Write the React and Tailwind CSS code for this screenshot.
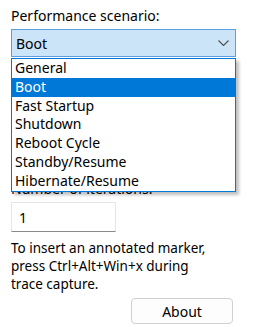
const options = [
  "General",
  "Boot",
  "Fast Startup",
  "Shutdown",
  "Reboot Cycle",
  "Standby/Resume",
  "Hibernate/Resume",
];

export default function App() {
  const selected = "Boot";

  return (
    <div
      className="w-[271px] h-[327px] bg-white text-black text-[14px] overflow-hidden"
      style={{ fontFamily: '"Noto Sans", "Open Sans", sans-serif' }}
    >
      <div className="pl-[11px] pt-[6px] w-[236px]">
        <div className="h-[20px] leading-[20px]">Performance scenario:</div>

        {/* combo box with open list */}
        <div className="relative mt-[3px]">
          <div className="h-[28px] border border-[#5a9fe0] bg-[#cce4f7] flex items-center justify-between pl-[4px] pr-[6px]">
            <span className="text-[14px]">{selected}</span>
            <svg width="11" height="6" viewBox="0 0 11 6" fill="none">
              <path d="M0.5 0.5 L5.5 5.5 L10.5 0.5" stroke="#555" strokeWidth="1.2" />
            </svg>
          </div>

          <div className="absolute left-0 top-[29px] w-full z-10 border border-[#0078d7] bg-white shadow-[3px_3px_3px_rgba(0,0,0,0.25)]">
            {options.map((o) => (
              <div
                key={o}
                className={
                  o === selected
                    ? "h-[18.8px] leading-[18.8px] pl-[3px] text-[14px] bg-[#0078d7] text-white"
                    : "h-[18.8px] leading-[18.8px] pl-[3px] text-[14px]"
                }
              >
                {o}
              </div>
            ))}
          </div>
        </div>

        <div className="mt-[122px] h-[20px] leading-[20px]">Number of iterations:</div>

        <div className="mt-[3px] w-[105px] h-[30px] bg-white border border-[#e5e5e5] border-b-[#8a8a8a] flex items-center pl-[7px]">
          1
        </div>

        <p className="mt-[7px] text-[13.5px] leading-[18px] w-[220px]">
          To insert an annotated marker,
          <br />
          press Ctrl+Alt+Win+x during
          <br />
          trace capture.
        </p>

        <div className="flex justify-end pr-[3px] mt-[5px]">
          <button className="w-[102px] h-[26px] rounded-[4px] border border-[#d0d0d0] bg-[#fdfdfd] text-[14px]">
            About
          </button>
        </div>
      </div>
    </div>
  );
}
